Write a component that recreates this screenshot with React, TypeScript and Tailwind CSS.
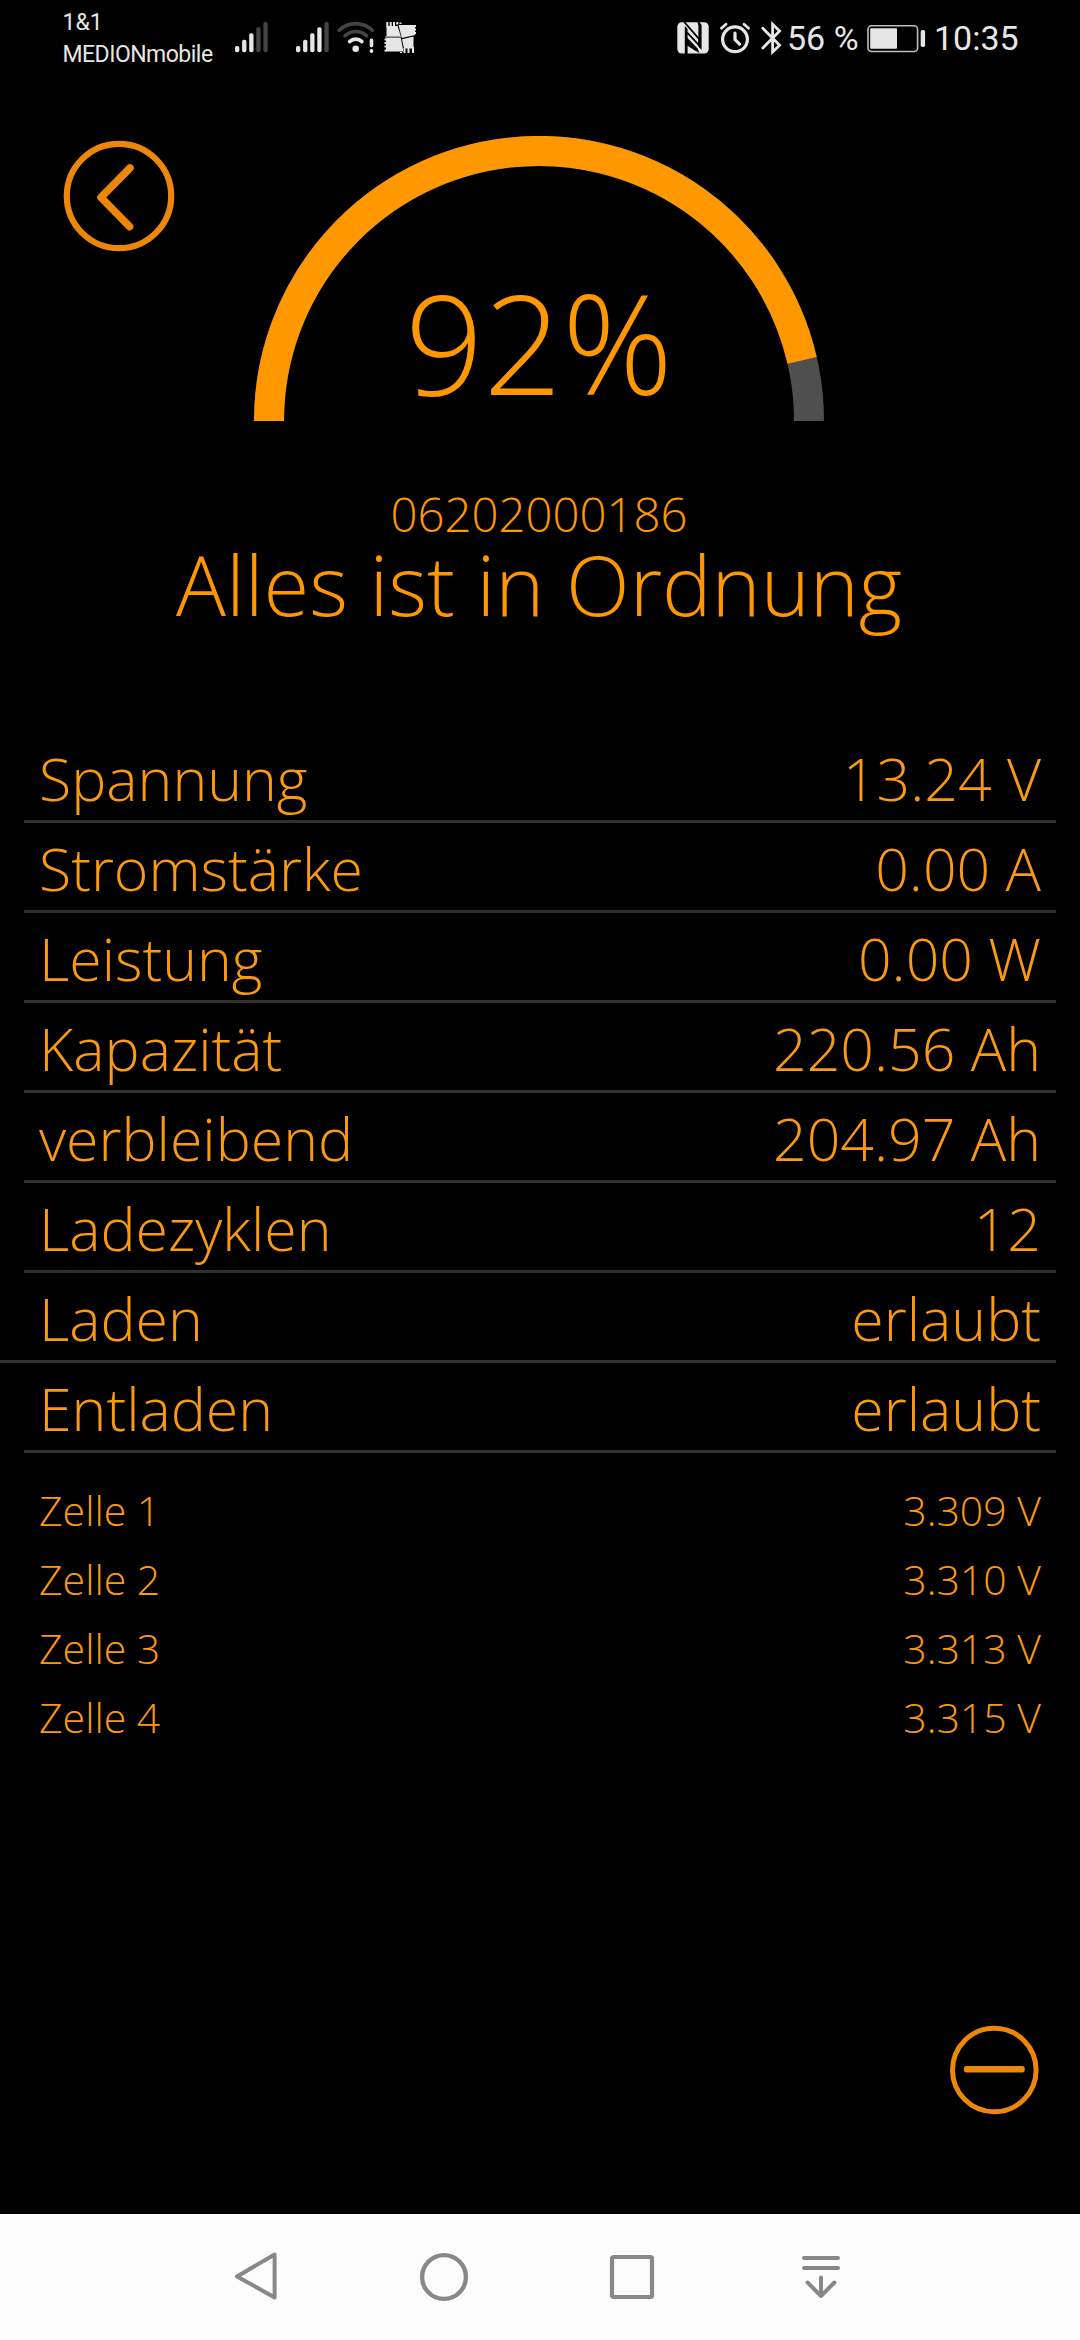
const VALUES = [
  { label: "Spannung", value: "13.24 V" },
  { label: "Stromstärke", value: "0.00 A" },
  { label: "Leistung", value: "0.00 W" },
  { label: "Kapazität", value: "220.56 Ah" },
  { label: "verbleibend", value: "204.97 Ah" },
  { label: "Ladezyklen", value: "12" },
  { label: "Laden", value: "erlaubt", bleed: true },
  { label: "Entladen", value: "erlaubt" },
];

const CELLS = [
  { label: "Zelle 1", value: "3.309 V" },
  { label: "Zelle 2", value: "3.310 V" },
  { label: "Zelle 3", value: "3.313 V" },
  { label: "Zelle 4", value: "3.315 V" },
];

const BAR_TOPS = [46, 39.7, 33.3, 27.3, 22];

function Signal({ level, className }: { level: number; className?: string }) {
  return (
    <svg viewBox="0 20 34 34" className={`h-[34px] w-[34px] ${className ?? ""}`}>
      {BAR_TOPS.map((top, i) => (
        <rect
          key={top}
          x={i * 7.1}
          y={top}
          width="4.3"
          height={52.3 - top}
          rx="1.8"
          fill={i < level ? "#e6e6e6" : "#444444"}
        />
      ))}
    </svg>
  );
}

function Wifi() {
  return (
    <svg viewBox="337 20 38 34" className="h-[34px] w-[38px]" fill="none" strokeWidth="3.6" strokeLinecap="round">
      <path d="M339.2 30.2 A24 24 0 0 1 372.2 30.2" stroke="#444444" />
      <path d="M345 35.8 A15.6 15.6 0 0 1 366.6 35.8" stroke="#444444" />
      <path d="M349.6 41.6 A9 9 0 0 1 361.9 41.6" stroke="#e6e6e6" />
      <circle cx="355.7" cy="48.7" r="3.3" fill="#e6e6e6" />
      <path d="M371.5 40.4 V45.6" stroke="#e6e6e6" />
      <circle cx="371.5" cy="51" r="1.9" fill="#e6e6e6" />
    </svg>
  );
}

function Patches() {
  return (
    <svg viewBox="384 20 33 34" className="h-[34px] w-[33px]" fill="#e6e6e6">
      <path d="M386.5 26 H397.6 L401 37 H386.5 Z" />
      <path d="M398.6 25 H415 V35 L401.8 38 Z" />
      <path d="M386 38 H400.9 L403.4 51.6 H386 Z" />
      <path d="M402 39.2 L413.5 36.4 V48.5 H404 Z" />
      <path
        d="M387.3 22 V27 M390.7 22 V27 M394 22 V27 M397.3 22 V24.5 M400.5 22.5 V24 M384.5 39.5 H387 M384.5 43 H387 M384.5 46.5 H387 M384.5 50.5 H387 M413 26 H416 M413 29.5 H416 M413 33 H416 M401 52 V53 M404.5 48 V53 M408.5 48 V53 M413 47 V53"
        stroke="#e6e6e6"
        strokeWidth="2"
      />
      <path d="M385 37 H400.5" stroke="#8a8a8a" strokeWidth="1.6" />
    </svg>
  );
}

function Nfc() {
  return (
    <svg viewBox="677 21 32 32" className="h-8 w-8">
      <rect x="677.3" y="21.3" width="31.4" height="31.2" rx="4.5" fill="#e6e6e6" />
      <path d="M684.2 21 L699.2 38.2 V44.4 L687.2 31.6" fill="none" stroke="#000" strokeWidth="1.8" />
      <path d="M684.8 25 L687.6 28 V53 H684.8 Z" />
      <path d="M697.4 21 H699.4 L701.6 24 V49 L698.4 45.6 V24.4 Z" />
      <path d="M687 36.4 L697.6 47.6 L699.4 52 L695 49.4 L687 44.6 Z" />
    </svg>
  );
}

function Alarm() {
  return (
    <svg viewBox="719 21 32 32" className="h-8 w-8" fill="none" stroke="#e6e6e6" strokeLinecap="round">
      <circle cx="735" cy="38.3" r="12.4" strokeWidth="3.2" />
      <path d="M735 32 V38.6 L739.6 43.2" strokeWidth="3.2" />
      <path d="M721.4 27.2 L726 23.2 M748.6 27.2 L744 23.2" strokeWidth="2.8" />
    </svg>
  );
}

function Bluetooth() {
  return (
    <svg viewBox="760 20 23 34" className="h-[34px] w-[23px]" fill="none" stroke="#e6e6e6" strokeWidth="2.8" strokeLinecap="round">
      <path d="M762.8 27.2 L779.6 44.2 L772.6 51 V23.2 L779.6 30 L762.8 47" />
    </svg>
  );
}

function Battery() {
  return (
    <svg viewBox="867 22 59 31" className="h-[31px] w-[59px]">
      <rect x="868" y="24.7" width="49.6" height="25.8" rx="3.5" fill="none" stroke="#bdbdbd" strokeWidth="1.6" />
      <rect x="870.2" y="27.2" width="26.8" height="20.6" rx="1" fill="#e6e6e6" />
      <rect x="920.7" y="29" width="4.4" height="17" rx="1.8" fill="#e6e6e6" />
    </svg>
  );
}

function StatusBar() {
  return (
    <header className="flex h-[76px] items-start font-['Roboto',sans-serif] font-normal text-[#e6e6e6]">
      <div className="ml-[62.5px] w-[172.5px] pt-[7px] text-[23px] leading-8 whitespace-nowrap">
        <p>1&amp;1</p>
        <p className="tracking-[-0.52px]">MEDIONmobile</p>
      </div>
      <div className="flex pt-5">
        <Signal level={3} />
        <Signal level={4} className="ml-[26.5px]" />
        <div className="ml-[7.5px]">
          <Wifi />
        </div>
        <div className="ml-[9px]">
          <Patches />
        </div>
      </div>
      <div className="mr-[62px] ml-auto flex h-[76px] items-center text-[34px] leading-[76px] whitespace-nowrap">
        <Nfc />
        <div className="ml-2.5">
          <Alarm />
        </div>
        <div className="ml-[9px]">
          <Bluetooth />
        </div>
        <span className="ml-1 w-[71px]">56 %</span>
        <div className="ml-[9px]">
          <Battery />
        </div>
        <span className="ml-[8px] w-[84px]">10:35</span>
      </div>
    </header>
  );
}

function Gauge() {
  return (
    <div className="relative ml-[79px] h-[285px] w-[570px]">
      <svg viewBox="0 0 570 285" className="h-full w-full" fill="none" strokeWidth="30">
        <path d="M15 285 A270 270 0 0 1 555 285" stroke="#4f4f4f" />
        <path d="M15 285 A270 270 0 0 1 548.1 224.3" stroke="#ff9800" />
      </svg>
      <p className="absolute inset-x-0 top-[137px] text-center text-[137.5px] leading-[138px]">92%</p>
    </div>
  );
}

function NavBar() {
  return (
    <nav className="flex h-[126px] items-center bg-[#fcfcfc]">
      <svg viewBox="0 0 52 52" className="ml-[230px] size-[52px]" fill="none" stroke="#888888" strokeWidth="4" strokeLinejoin="round">
        <path d="M44.6 3.6 V46.4 L7 25.4 Z" />
      </svg>
      <svg viewBox="0 0 52 52" className="ml-[136px] size-[52px]" fill="none" stroke="#888888" strokeWidth="4.4">
        <circle cx="26" cy="26" r="21.9" />
      </svg>
      <svg viewBox="0 0 52 52" className="ml-[136px] size-[52px]" fill="none" stroke="#888888" strokeWidth="4.2">
        <rect x="6" y="6" width="40" height="40" rx="1.5" />
      </svg>
      <svg viewBox="0 0 52 52" className="ml-[137px] size-[52px]" fill="none" stroke="#888888" strokeWidth="4" strokeLinecap="round" strokeLinejoin="round">
        <path d="M9 7 H43 M9 17 H43 M26 26.5 V45 M12.6 31.5 L26 45 L39.4 31.5" />
      </svg>
    </nav>
  );
}

export default function App() {
  return (
    <div className="flex h-[2340px] w-[1080px] flex-col overflow-hidden bg-black font-['Open_Sans',sans-serif] font-light text-[#ff9800]">
      <StatusBar />

      <div className="mt-[60px] flex items-start">
        <svg viewBox="0 0 112 112" className="mt-1 ml-[63px] size-28" fill="none" stroke="#ed8709" strokeLinecap="round" strokeLinejoin="round">
          <circle cx="56" cy="56" r="52.2" strokeWidth="6.2" />
          <path d="M67 28 L38 57.4 L66.6 86.6" strokeWidth="7.6" />
        </svg>
        <Gauge />
      </div>

      <div className="mt-[63px] w-[1078px] text-center whitespace-nowrap">
        <p className="text-[47.3px] leading-[60px]">06202000186</p>
        <h1 className="text-[83.2px] leading-[80px]">Alles ist in Ordnung</h1>
      </div>

      <div className="mt-[109px] text-[59px] text-[#fb9a10]">
        {VALUES.map((row) => (
          <div
            key={row.label}
            className={`mr-6 flex h-[90px] justify-between border-b-[3px] border-[#303030] pt-[1.5px] pr-[15px] leading-[87px] ${
              row.bleed ? "pl-[39px]" : "ml-6 pl-[15px]"
            }`}
          >
            <span>{row.label}</span>
            <span>{row.value}</span>
          </div>
        ))}
      </div>

      <div className="mt-[23px] px-[39px] text-[41px] leading-[69px] text-[#fb9a10]">
        {CELLS.map((cell) => (
          <div key={cell.label} className="flex justify-between">
            <span>{cell.label}</span>
            <span>{cell.value}</span>
          </div>
        ))}
      </div>

      <svg viewBox="0 0 90 90" className="mt-auto mb-[99px] ml-[949px] size-[90px]" fill="none" stroke="#ed8709">
        <circle cx="45.3" cy="45" r="41.8" strokeWidth="5" />
        <rect x="15" y="41" width="60.7" height="6.4" rx="2.2" fill="#ed8709" stroke="none" />
      </svg>

      <NavBar />
    </div>
  );
}
